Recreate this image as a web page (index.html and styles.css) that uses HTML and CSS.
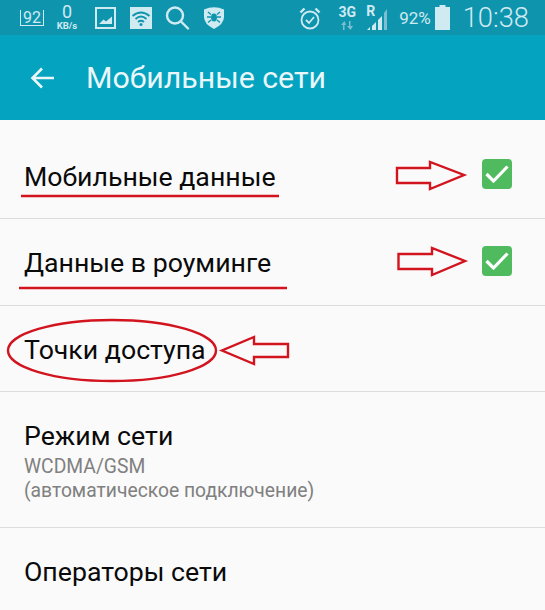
FILE: index.html
```html
<!DOCTYPE html>
<html lang="ru">
  <head>
    <meta charset="UTF-8" />
    <meta name="viewport" content="width=device-width, initial-scale=1.0" />
    <title>Мобильные сети</title>
    <link rel="stylesheet" href="styles.css">
  </head>
  <body>
    <div class="phone">
      <!-- Status bar -->
      <div class="status-bar">
        <div class="status-left">
          <div class="msg-badge">92</div>
          <div class="speed"><span class="speed-num">0</span><span class="speed-unit">KB/s</span></div>
          <svg width="21" height="22" viewBox="0 0 21 22">
            <rect x="1" y="1" width="19" height="20" fill="none" stroke="#cfeaf1" stroke-width="2" />
            <path d="M4 17L8.500 12.500L11 14.500L17 9.500V17Z" fill="#cfeaf1" />
          </svg>
          <svg class="ic-wifi" width="22" height="22" viewBox="0 0 22 22">
            <rect width="22" height="22" fill="#cfeaf1" />
            <path d="M2.500 9Q11 2 19.500 9M5.500 12Q11 7 16.500 12M8 15Q11 12.500 14 15" fill="none" stroke="#0f94ae" stroke-width="1.800" />
            <circle cx="11" cy="17.500" r="1.500" fill="#0f94ae" />
          </svg>
          <svg class="ic-search" width="25" height="24" viewBox="0 0 25 24" fill="none" stroke="#cfeaf1" stroke-width="2.400">
            <circle cx="10" cy="9.500" r="8" />
            <path d="M16 15.500L23 22.500" stroke-linecap="round" />
          </svg>
          <svg class="ic-shield" width="22" height="23" viewBox="0 0 22 23">
            <path d="M1 3.500Q11 -1 21 3.500V11Q21 18 11 23Q1 18 1 11Z" fill="#cfeaf1" />
            <ellipse cx="11" cy="11.500" rx="3" ry="4" fill="#0f94ae" />
            <path d="M5 6L8 8.500M17 6L14 8.500M4 11H8M18 11H14M5 16.500L8 14M17 16.500L14 14" stroke="#0f94ae" stroke-width="1.300" />
          </svg>
        </div>
        <div class="status-right">
          <svg class="ic-alarm" width="22" height="24" viewBox="0 0 22 24" fill="none" stroke="#cfeaf1" stroke-width="1.800">
            <circle cx="11" cy="14" r="8.500" />
            <path d="M7 14L10 17L15 11" />
            <path d="M1.500 6.500L5.500 2.500M20.500 6.500L16.500 2.500" stroke-width="2.400" />
          </svg>
          <div class="net">
            <span class="net-label">3G</span>
            <svg width="14" height="9" viewBox="0 0 14 9" fill="#7dbfd0">
              <path d="M3 9V4H1L4.500 0L6 4H4.500V9ZM9 0V5H7L10.500 9L13 5H10.500V0Z" />
            </svg>
          </div>
          <div class="signal">
            <span class="net-label">R</span>
            <svg width="24" height="24" viewBox="0 0 24 24">
              <path d="M1 24H4V21ZM6 24H10V16L6 20ZM12 24H16V10L12 14Z" fill="#cfeaf1" />
              <path d="M18 24H21V3L18 7Z" fill="#7dbfd0" />
            </svg>
          </div>
          <span class="battery-pct">92%</span>
          <svg class="ic-battery" width="15" height="25" viewBox="0 0 15 25">
            <path d="M4.500 0H10.500V2H15V25H0V2H4.500Z" fill="#cfeaf1" />
          </svg>
          <span class="clock">10:38</span>
        </div>
      </div>

      <!-- Action bar -->
      <div class="action-bar">
        <svg class="back" width="25" height="24" viewBox="0 0 25 24" fill="none" stroke="#eaf7fa" stroke-width="2.600">
          <path d="M24 12H3M12 2.500L2.500 12L12 21.500" />
        </svg>
        <h1>Мобильные сети</h1>
      </div>

      <!-- Settings list -->
      <div class="list">
        <div class="row row-data">
          <span class="row-title">Мобильные данные</span>
          <span class="check">
            <svg width="24" height="18" viewBox="0 0 24 18" fill="none" stroke="#fff" stroke-width="3.200">
              <path d="M1.500 9L8.500 16L22.500 1.500" />
            </svg>
          </span>
        </div>
        <div class="row row-roaming">
          <span class="row-title">Данные в роуминге</span>
          <span class="check">
            <svg width="24" height="18" viewBox="0 0 24 18" fill="none" stroke="#fff" stroke-width="3.200">
              <path d="M1.500 9L8.500 16L22.500 1.500" />
            </svg>
          </span>
        </div>
        <div class="row row-apn">
          <span class="row-title">Точки доступа</span>
        </div>
        <div class="row row-mode">
          <span class="row-title">Режим сети</span>
          <span class="row-sub">WCDMA/GSM<br>(автоматическое подключение)</span>
        </div>
        <div class="row row-ops">
          <span class="row-title">Операторы сети</span>
        </div>
      </div>

      <!-- Red annotations drawn on top of the screenshot -->
      <svg class="marks" width="545" height="610" viewBox="0 0 545 610" fill="none" stroke="#d2141f" stroke-width="2.400">
        <path d="M21 196H279" />
        <path d="M19 288H287" />
        <path d="M397 168H430V162L464 175L430 189V183H397Z" />
        <path d="M398.500 254H432V248L465 261L432 275V269H398.500Z" />
        <path d="M288 344H254V337L222 350.500L254 364V357H288Z" />
        <ellipse cx="112" cy="350.500" rx="104" ry="30.500" />
      </svg>
    </div>
  </body>
</html>
```

FILE: styles.css
```css
* {
  margin: 0;
  padding: 0;
  box-sizing: border-box;
}

body {
  font-family: Roboto, "Liberation Sans", sans-serif;
  background-color: #fafafa;
}

.phone {
  position: relative;
  width: 545px;
  height: 610px;
  overflow: hidden;
}

.status-bar {
  height: 35px;
  background-color: #0f94ae;
  color: #cfeaf1;
  display: flex;
  justify-content: space-between;
  align-items: center;
  padding: 0 16px 0 20px;
}

.status-left,
.status-right {
  display: flex;
  align-items: center;
}

.msg-badge {
  width: 24px;
  height: 16px;
  border: 1.500px solid #cfeaf1;
  border-top: none;
  font-size: 16px;
  line-height: 15px;
  text-align: center;
}

.speed {
  display: flex;
  flex-direction: column;
  align-items: center;
  gap: 3px;
  width: 26px;
  margin: 0 15px 0 10px;
}

.speed-num {
  font-size: 18px;
  line-height: 14px;
}

.speed-unit {
  font-size: 9.500px;
  line-height: 8px;
  font-weight: bold;
}

.ic-wifi {
  margin-left: 14px;
}

.ic-search {
  margin-left: 13px;
}

.ic-shield {
  margin-left: 13px;
}

.net {
  display: flex;
  flex-direction: column;
  align-items: center;
  gap: 2px;
  margin-left: 18px;
  line-height: 1;
}

.net-label {
  font-size: 14px;
  font-weight: bold;
}

.signal {
  position: relative;
  width: 24px;
  height: 24px;
  margin-left: 10px;
}

.signal .net-label {
  position: absolute;
  left: 0;
  top: -3px;
}

.battery-pct {
  font-size: 17px;
  margin-left: 9px;
}

.ic-battery {
  margin-left: 4px;
}

.clock {
  font-size: 27.300px;
  font-weight: 300;
  margin-left: 13px;
}

.action-bar {
  height: 85px;
  background-color: #04a3bf;
  color: #eaf7fa;
  display: flex;
  align-items: center;
  padding-left: 30px;
}

.action-bar h1 {
  font-size: 30.300px;
  font-weight: 400;
  margin-left: 31px;
}

.row {
  display: flex;
  flex-direction: column;
  justify-content: center;
  padding-left: 24px;
  border-bottom: 1.500px solid #dcdcdc;
  color: #0a0a0a;
}

.row-data,
.row-roaming {
  flex-direction: row;
  justify-content: space-between;
  align-items: center;
  padding-right: 33px;
}

.row-data {
  height: 99px;
  padding-top: 10px;
}

.row-data .row-title {
  margin-top: 6px;
}

.row-roaming {
  height: 87px;
}

.row-roaming .row-title {
  margin-top: 2px;
}

.row-roaming .check {
  margin-bottom: 2px;
}

.row-apn {
  height: 86px;
  padding-top: 2px;
}

.row-mode {
  height: 136px;
  padding-top: 4px;
}

.row-ops {
  height: 83px;
  border-bottom: none;
  padding-top: 4px;
}

.row-title {
  font-size: 26.700px;
}

.row-sub {
  font-size: 19.300px;
  line-height: 24px;
  color: #808080;
  margin-top: 3px;
}

.check {
  width: 30px;
  height: 30px;
  background-color: #4fba5e;
  border-radius: 4px;
  display: flex;
  align-items: center;
  justify-content: center;
}

.marks {
  position: absolute;
  left: 0;
  top: 0;
  pointer-events: none;
}
```
